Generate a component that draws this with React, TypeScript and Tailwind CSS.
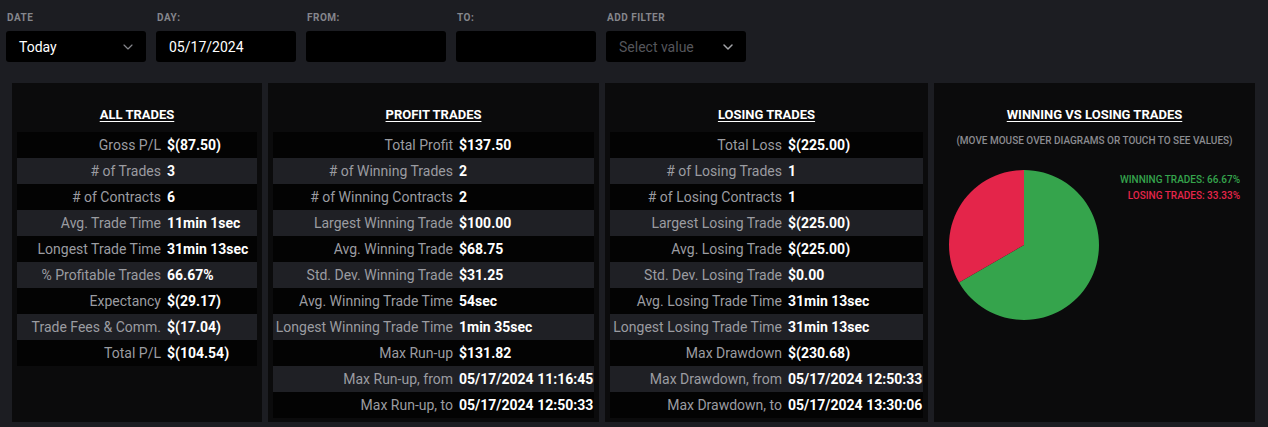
import { ChevronDown } from "lucide-react"

type Row = [string, string]

const allTrades: Row[] = [
  ["Gross P/L", "$(87.50)"],
  ["# of Trades", "3"],
  ["# of Contracts", "6"],
  ["Avg. Trade Time", "11min 1sec"],
  ["Longest Trade Time", "31min 13sec"],
  ["% Profitable Trades", "66.67%"],
  ["Expectancy", "$(29.17)"],
  ["Trade Fees & Comm.", "$(17.04)"],
  ["Total P/L", "$(104.54)"],
]

const profitTrades: Row[] = [
  ["Total Profit", "$137.50"],
  ["# of Winning Trades", "2"],
  ["# of Winning Contracts", "2"],
  ["Largest Winning Trade", "$100.00"],
  ["Avg. Winning Trade", "$68.75"],
  ["Std. Dev. Winning Trade", "$31.25"],
  ["Avg. Winning Trade Time", "54sec"],
  ["Longest Winning Trade Time", "1min 35sec"],
  ["Max Run-up", "$131.82"],
  ["Max Run-up, from", "05/17/2024 11:16:45"],
  ["Max Run-up, to", "05/17/2024 12:50:33"],
]

const losingTrades: Row[] = [
  ["Total Loss", "$(225.00)"],
  ["# of Losing Trades", "1"],
  ["# of Losing Contracts", "1"],
  ["Largest Losing Trade", "$(225.00)"],
  ["Avg. Losing Trade", "$(225.00)"],
  ["Std. Dev. Losing Trade", "$0.00"],
  ["Avg. Losing Trade Time", "31min 13sec"],
  ["Longest Losing Trade Time", "31min 13sec"],
  ["Max Drawdown", "$(230.68)"],
  ["Max Drawdown, from", "05/17/2024 12:50:33"],
  ["Max Drawdown, to", "05/17/2024 13:30:06"],
]

function Field({ label, children }: { label: string; children?: React.ReactNode }) {
  return (
    <div className="w-[140px]">
      <div className="h-[24px] pl-[1px] pt-[12px] text-[10px] font-bold leading-[12px] tracking-[0.05em] text-[#85868c]">
        {label}
      </div>
      <div className="mt-[7px] flex h-[31px] items-center rounded-[3px] bg-black pl-[13px] pr-[10px] pt-[1px] text-[14px]">
        {children}
      </div>
    </div>
  )
}

function StatsPanel({ title, rows, labelWidth, width }: { title: string; rows: Row[]; labelWidth: string; width: string }) {
  return (
    <div className={`${width} bg-[#0b0b0c] px-[5px] pb-[4px]`}>
      <h2 className="pt-[25px] pb-[10px] text-center text-[13px] font-bold leading-[14px] text-white underline underline-offset-[2px]">
        {title}
      </h2>
      <table className="w-full border-collapse text-[14px]">
        <tbody>
          {rows.map(([label, value], i) => (
            <tr key={label} className={i % 2 === 1 ? "bg-[#1f2025]" : "bg-[#030303]"}>
              <td className={`${labelWidth} h-[26px] whitespace-nowrap pr-[3px] text-right text-[#9b9ca1]`}>{label}</td>
              <td className="h-[26px] whitespace-nowrap pl-[3px] font-bold text-white">{value}</td>
            </tr>
          ))}
        </tbody>
      </table>
    </div>
  )
}

function Pie() {
  // 66.67% win slice drawn clockwise from 12 o'clock, loss slice fills the rest
  const cx = 75
  const cy = 75
  const r = 75
  const a = (2 / 3) * Math.PI * 2 - Math.PI / 2
  const x = cx + r * Math.cos(a)
  const y = cy + r * Math.sin(a)
  return (
    <svg width="150" height="150" viewBox="0 0 150 150">
      <path d={`M${cx} ${cy} L${cx} 0 A${r} ${r} 0 1 1 ${x} ${y} Z`} fill="#35a44c" />
      <path d={`M${cx} ${cy} L${x} ${y} A${r} ${r} 0 0 1 ${cx} 0 Z`} fill="#e4254a" />
    </svg>
  )
}

export default function App() {
  return (
    <div className="h-[427px] w-[1268px] overflow-hidden bg-[#1c1d22] font-['Roboto',sans-serif]">
      <div className="flex gap-[10px] pl-[6px]">
        <Field label="DATE">
          <span className="flex-1 text-white">Today</span>
          <ChevronDown size={16} strokeWidth={1.75} className="text-[#85868c]" />
        </Field>
        <Field label="DAY:">
          <span className="text-white">05/17/2024</span>
        </Field>
        <Field label="FROM:" />
        <Field label="TO:" />
        <Field label="ADD FILTER">
          <span className="flex-1 text-[#55565b]">Select value</span>
          <ChevronDown size={16} strokeWidth={2.25} className="text-[#a3a4a8]" />
        </Field>
      </div>

      <div className="mt-[21px] flex h-[339px] gap-[6px] pl-[12px]">
        <StatsPanel title="ALL TRADES" rows={allTrades} labelWidth="w-[147px]" width="w-[250px]" />
        <StatsPanel title="PROFIT TRADES" rows={profitTrades} labelWidth="w-[183px]" width="w-[331px]" />
        <StatsPanel title="LOSING TRADES" rows={losingTrades} labelWidth="w-[175px]" width="w-[323px]" />

        <div className="w-[321px] bg-[#0b0b0c]">
          <h2 className="pt-[25px] text-center text-[13px] font-bold leading-[14px] text-white underline underline-offset-[2px]">
            WINNING VS LOSING TRADES
          </h2>
          <p className="mt-[13px] text-center text-[10px] font-medium leading-[12px] text-[#8b8c91]">
            (MOVE MOUSE OVER DIAGRAMS OR TOUCH TO SEE VALUES)
          </p>
          <div className="mt-[23px] flex pl-[15px] pr-[15px]">
            <Pie />
            <div className="flex-1 pt-[2px] text-right text-[10px] font-medium leading-[16px]">
              <div className="text-[#35a44c]">WINNING TRADES: 66.67%</div>
              <div className="text-[#e4254a]">LOSING TRADES: 33.33%</div>
            </div>
          </div>
        </div>
      </div>
    </div>
  )
}
